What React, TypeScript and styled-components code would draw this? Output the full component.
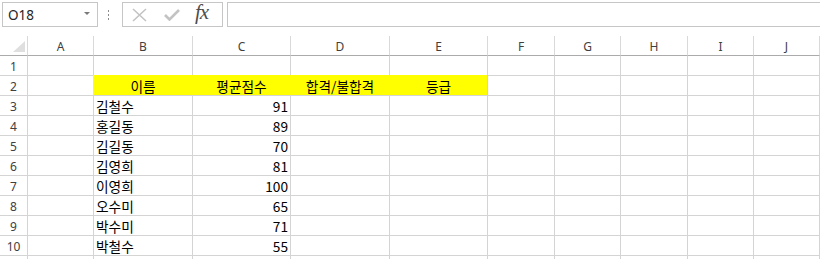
import React from 'react';
import styled, { createGlobalStyle } from 'styled-components';

const GlobalStyle = createGlobalStyle`
    html, body {
        margin: 0;
        padding: 0;
        background: #ffffff;
    }
    body {
        font-family: "Noto Sans", "Noto Sans CJK KR", sans-serif;
    }
    * {
        box-sizing: border-box;
    }
`;

const Page = styled.div`
    width: 820px;
    height: 259px;
    overflow: hidden;
    background: #ffffff;
`;

const FormulaBar = styled.div`
    height: 36px;
    display: flex;
    align-items: flex-start;
    padding: 2px 0 0 2px;
`;

const NameBox = styled.div`
    width: 96px;
    height: 25px;
    border: 1px solid #c6c6c6;
    display: flex;
    align-items: center;
    padding-left: 5px;
    font-size: 13.5px;
    color: #262626;
`;

const DropArrow = styled.span`
    margin-left: auto;
    margin-right: 7px;
    margin-top: -2px;
    width: 0;
    height: 0;
    border-left: 3px solid transparent;
    border-right: 3px solid transparent;
    border-top: 3px solid #7a7a7a;
`;

const Dots = styled.div`
    width: 24px;
    height: 25px;
    display: flex;
    flex-direction: column;
    align-items: center;
    justify-content: center;
    gap: 2px;
    padding-right: 4px;
`;

const Dot = styled.span`
    width: 1px;
    height: 2px;
    background: #8c8c8c;
`;

const FxBox = styled.div`
    width: 101px;
    height: 25px;
    border: 1px solid #c6c6c6;
    display: flex;
    align-items: center;
    padding-left: 9px;
    gap: 17px;
`;

const FxText = styled.span`
    font-family: "Liberation Serif", serif;
    font-style: italic;
    font-size: 21px;
    color: #4d4d4d;
    margin-top: -4px;
    margin-left: -2px;
    letter-spacing: -1px;
`;

const FormulaInput = styled.div`
    flex: 1;
    height: 25px;
    margin-left: 4px;
    border: 1px solid #c6c6c6;
    border-right: none;
`;

const COLS = ['A', 'B', 'C', 'D', 'E', 'F', 'G', 'H', 'I', 'J'];

const Sheet = styled.div`
    display: grid;
    grid-template-columns: 27px 66px 99px 98px 99px 98px 67px 66px 67px 66px 66px 1px;
    grid-template-rows: 20px 19px repeat(10, 20px);
`;

const Corner = styled.div`
    position: relative;
    border-bottom: 1px solid #ababab;
    &::after {
        content: '';
        position: absolute;
        right: 2px;
        bottom: 3px;
        width: 0;
        height: 0;
        border-left: 12px solid transparent;
        border-bottom: 11px solid #dfdfdf;
    }
`;

const ColHeader = styled.div`
    border-left: 1px solid #d9d9d9;
    border-bottom: 1px solid #ababab;
    display: flex;
    align-items: center;
    justify-content: center;
    font-size: 12px;
    color: #404040;
    padding-top: 1px;
`;

const RowHeader = styled.div<{ $first?: boolean }>`
    border-top: ${p => (p.$first ? 'none' : '1px solid #d4d4d4')};
    display: flex;
    align-items: center;
    justify-content: center;
    font-size: 12px;
    color: #404040;
    padding-top: 1px;
`;

const Cell = styled.div<{ $first?: boolean; $fill?: boolean; $align?: 'left' | 'center' | 'right' }>`
    border-top: ${p => (p.$first ? 'none' : `1px solid ${p.$fill ? '#ffff00' : '#d4d4d4'}`)};
    border-left: 1px solid ${p => (p.$fill ? '#ffff00' : '#d4d4d4')};
    background: ${p => (p.$fill ? '#ffff00' : 'transparent')};
    display: flex;
    align-items: center;
    justify-content: ${p => (p.$align === 'right' ? 'flex-end' : p.$align === 'center' ? 'center' : 'flex-start')};
    padding: 1px 2px 0 2px;
    font-family: "Noto Sans CJK KR", "Noto Sans", sans-serif;
    font-size: 13.7px;
    color: #000000;
    white-space: nowrap;
    overflow: hidden;
`;

const EdgeCell = styled(Cell)`
    padding: 0;
`;

const students: [string, number][] = [
    ['김철수', 91],
    ['홍길동', 89],
    ['김길동', 70],
    ['김영희', 81],
    ['이영희', 100],
    ['오수미', 65],
    ['박수미', 71],
    ['박철수', 55],
];

const headings = ['이름', '평균점수', '합격/불합격', '등급'];

const App = () => {
    const rows: React.ReactNode[] = [];

    for (let r = 1; r <= 11; r++) {
        const first = r === 1;
        rows.push(<RowHeader key={`rh${r}`} $first={first}>{r <= 10 ? r : ''}</RowHeader>);
        COLS.forEach((c, i) => {
            let content: React.ReactNode = '';
            let align: 'left' | 'center' | 'right' = 'left';
            let fill = false;
            if (r === 2 && i >= 1 && i <= 4) {
                content = headings[i - 1];
                align = 'center';
                fill = true;
            }
            const s = students[r - 3];
            if (s && i === 1) content = s[0];
            if (s && i === 2) {
                content = s[1];
                align = 'right';
            }
            rows.push(
                <Cell key={`${c}${r}`} $first={first} $fill={fill} $align={align}>
                    {content}
                </Cell>
            );
        });
        rows.push(<EdgeCell key={`k${r}`} $first={first} />);
    }

    return (
        <Page>
            <GlobalStyle />
            <FormulaBar>
                <NameBox>
                    O18
                    <DropArrow />
                </NameBox>
                <Dots>
                    <Dot />
                    <Dot />
                    <Dot />
                </Dots>
                <FxBox>
                    <svg width="15" height="14" viewBox="0 0 15 14">
                        <path d="M1 1 L14 13 M14 1 L1 13" stroke="#c3c3c3" strokeWidth="1.6" fill="none" />
                    </svg>
                    <svg width="16" height="12" viewBox="0 0 16 12">
                        <path d="M1 6 L5.5 10.5 L15 1" stroke="#c3c3c3" strokeWidth="2.6" fill="none" />
                    </svg>
                    <FxText>fx</FxText>
                </FxBox>
                <FormulaInput />
            </FormulaBar>
            <Sheet>
                <Corner />
                {COLS.map(c => (
                    <ColHeader key={c}>{c}</ColHeader>
                ))}
                <ColHeader />
                {rows}
            </Sheet>
        </Page>
    );
};

export default App;
